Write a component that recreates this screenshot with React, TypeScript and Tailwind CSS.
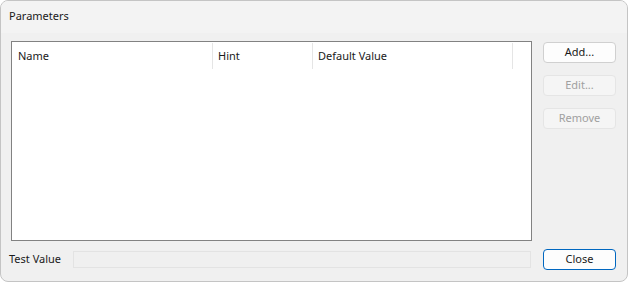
export default function App() {
  const font = { fontFamily: '"Noto Sans", "Open Sans", sans-serif' };
  return (
    <div className="w-[628px] h-[282px] bg-white" style={font}>
      <div className="w-[628px] h-[282px] rounded-[8px] border border-[#c4c4c4] bg-[#f0f0f0] flex flex-col overflow-hidden text-[11px] text-[#1a1a1a]">
        <div className="h-[32px] shrink-0 bg-[#f3f3f3] flex items-center pl-[8px] pb-[1px]">Parameters</div>
        <div className="flex-1 flex flex-col pl-[10px] pr-[11px] pt-[8px] pb-[11px]">
          <div className="flex flex-1 gap-[11px]">
            <div className="w-[521px] border border-[#828282] bg-white">
              <div className="flex h-[26px] mt-[1px]">
                <div className="w-[201px] border-r border-[#e5e5e5] pl-[6px] flex items-center">Name</div>
                <div className="w-[100px] border-r border-[#e5e5e5] pl-[5px] flex items-center">Hint</div>
                <div className="w-[200px] border-r border-[#e5e5e5] pl-[5px] flex items-center">Default Value</div>
              </div>
            </div>
            <div className="flex flex-col gap-[12px] pt-[1px]">
              <button className="w-[73px] h-[21px] rounded-[4px] border border-[#d0d0d0] bg-[#fdfdfd] text-[#1a1a1a] flex items-center justify-center">Add...</button>
              <button className="w-[73px] h-[21px] rounded-[4px] border border-[#e5e5e5] bg-[#f5f5f5] text-[#a0a0a0] flex items-center justify-center">Edit...</button>
              <button className="w-[73px] h-[21px] rounded-[4px] border border-[#e5e5e5] bg-[#f5f5f5] text-[#a0a0a0] flex items-center justify-center">Remove</button>
            </div>
          </div>
          <div className="flex items-center h-[21px] mt-[8px]">
            <div className="w-[64px] -ml-[2px]">Test Value</div>
            <div className="w-[458px] h-[17px] border border-[#e3e3e3] bg-[#f0f0f0]"></div>
            <button className="ml-[12px] w-[73px] h-[21px] rounded-[4px] border border-[#0067c0] bg-[#fdfdfd] text-[#1a1a1a] flex items-center justify-center">Close</button>
          </div>
        </div>
      </div>
    </div>
  );
}
